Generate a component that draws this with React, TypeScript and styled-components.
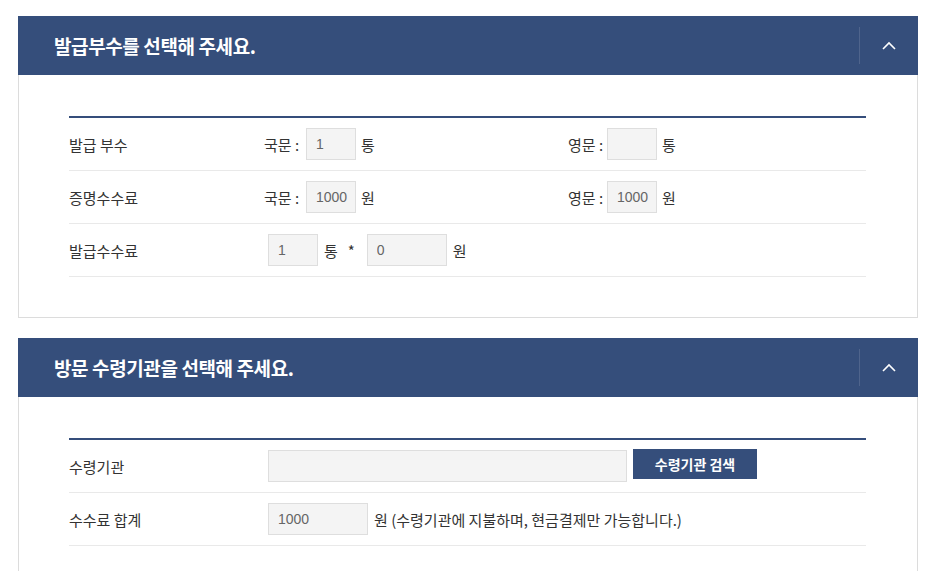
import React from "react";
import styled, { createGlobalStyle } from "styled-components";

const GlobalStyle = createGlobalStyle`
  html, body {
    margin: 0;
    padding: 0;
    background: #fff;
    font-family: "Noto Sans CJK KR", "Noto Sans", sans-serif;
    color: #333;
  }
`;

const Page = styled.div`
  padding: 16px 24px 0 18px;
  display: flex;
  flex-direction: column;
  gap: 20px;
`;

const Panel = styled.section`
  width: 900px;
  box-sizing: border-box;
`;

const Header = styled.div`
  height: 59px;
  background: #354e7b;
  display: flex;
  align-items: center;
`;

const HeaderTitle = styled.h3`
  flex: 1;
  margin: 0;
  padding-left: 36px;
  font-size: 19px;
  font-weight: 700;
  color: #fff;
  letter-spacing: -0.4px;
`;

const ToggleButton = styled.button`
  width: 59px;
  height: 37px;
  border: 0;
  border-left: 1px solid rgba(255, 255, 255, 0.13);
  background: transparent;
  display: flex;
  align-items: center;
  justify-content: center;
  padding: 0;
  cursor: pointer;
`;

const Body = styled.div<{ $pad: string }>`
  border: 1px solid #dcdcdc;
  border-top: 0;
  padding: ${(p) => p.$pad};
`;

const Table = styled.div`
  width: 797px;
  border-top: 2px solid #354e7b;
`;

const Row = styled.div`
  display: flex;
  align-items: center;
  height: 53px;
  border-bottom: 1px solid #e9e9e9;
  box-sizing: border-box;
  font-size: 15px;
  color: #333;
`;

const Label = styled.div`
  width: 188px;
  flex-shrink: 0;
`;

const Value = styled.div<{ $indent?: number }>`
  display: flex;
  align-items: center;
  padding-left: ${(p) => p.$indent ?? 0}px;
  gap: 6px;
`;

const Half = styled.div<{ $indent?: number }>`
  width: 311px;
  flex-shrink: 0;
  box-sizing: border-box;
  padding-left: ${(p) => p.$indent ?? 0}px;
  display: flex;
  align-items: center;
  gap: 5px;
`;

const Caption = styled.span<{ $w: number }>`
  width: ${(p) => p.$w}px;
  margin-right: 1px;
  white-space: nowrap;
`;

const Field = styled.input<{ $w: number }>`
  width: ${(p) => p.$w}px;
  height: 32px;
  box-sizing: border-box;
  border: 1px solid #dedede;
  background: #f4f4f4;
  padding: 0 0 0 9px;
  font-family: "Liberation Sans", Arial, sans-serif;
  font-size: 14px;
  color: #666;
  outline: none;
`;

const Star = styled.span`
  margin: 0 6px 0 4px;
`;

const SearchButton = styled.button`
  height: 30px;
  width: 124px;
  border: 0;
  background: #354e7b;
  color: #fff;
  font-family: "Noto Sans CJK KR", sans-serif;
  font-size: 14px;
  font-weight: 700;
  cursor: pointer;
  align-self: flex-start;
  margin-top: -1px;
`;

const Chevron = () => (
  <svg width="14" height="9" viewBox="0 0 14 9">
    <path d="M1 8 L7 2 L13 8" fill="none" stroke="#fff" strokeWidth="1.6" />
  </svg>
);

const SectionHeader = ({ title }: { title: string }) => (
  <Header>
    <HeaderTitle>{title}</HeaderTitle>
    <ToggleButton aria-label="접기">
      <Chevron />
    </ToggleButton>
  </Header>
);

const PairRow = ({
  label,
  ko,
  en,
  unit,
}: {
  label: string;
  ko: string;
  en: string;
  unit: string;
}) => (
  <Row>
    <Label>{label}</Label>
    <Half $indent={7}>
      <Caption $w={36}>국문 :</Caption>
      <Field $w={50} defaultValue={ko} />
      <span>{unit}</span>
    </Half>
    <Half>
      <Caption $w={33}>영문 :</Caption>
      <Field $w={50} defaultValue={en} />
      <span>{unit}</span>
    </Half>
  </Row>
);

export default function App() {
  return (
    <>
      <GlobalStyle />
      <Page>
        <Panel>
          <SectionHeader title="발급부수를 선택해 주세요." />
          <Body $pad="41px 50px 40px 50px">
            <Table>
              <PairRow label="발급 부수" ko="1" en="" unit="통" />
              <PairRow label="증명수수료" ko="1000" en="1000" unit="원" />
              <Row>
                <Label>발급수수료</Label>
                <Value $indent={11}>
                  <Field $w={50} defaultValue="1" />
                  <span>통</span>
                  <Star>*</Star>
                  <Field $w={80} defaultValue="0" />
                  <span>원</span>
                </Value>
              </Row>
            </Table>
          </Body>
        </Panel>
        <Panel>
          <SectionHeader title="방문 수령기관을 선택해 주세요." />
          <Body $pad="41px 50px 40px 50px">
            <Table>
              <Row>
                <Label>수령기관</Label>
                <Value $indent={11}>
                  <Field $w={359} defaultValue="" />
                  <SearchButton>수령기관 검색</SearchButton>
                </Value>
              </Row>
              <Row>
                <Label>수수료 합계</Label>
                <Value $indent={11}>
                  <Field $w={100} defaultValue="1000" />
                  <span>원 (수령기관에 지불하며, 현금결제만 가능합니다.)</span>
                </Value>
              </Row>
            </Table>
          </Body>
        </Panel>
      </Page>
    </>
  );
}
